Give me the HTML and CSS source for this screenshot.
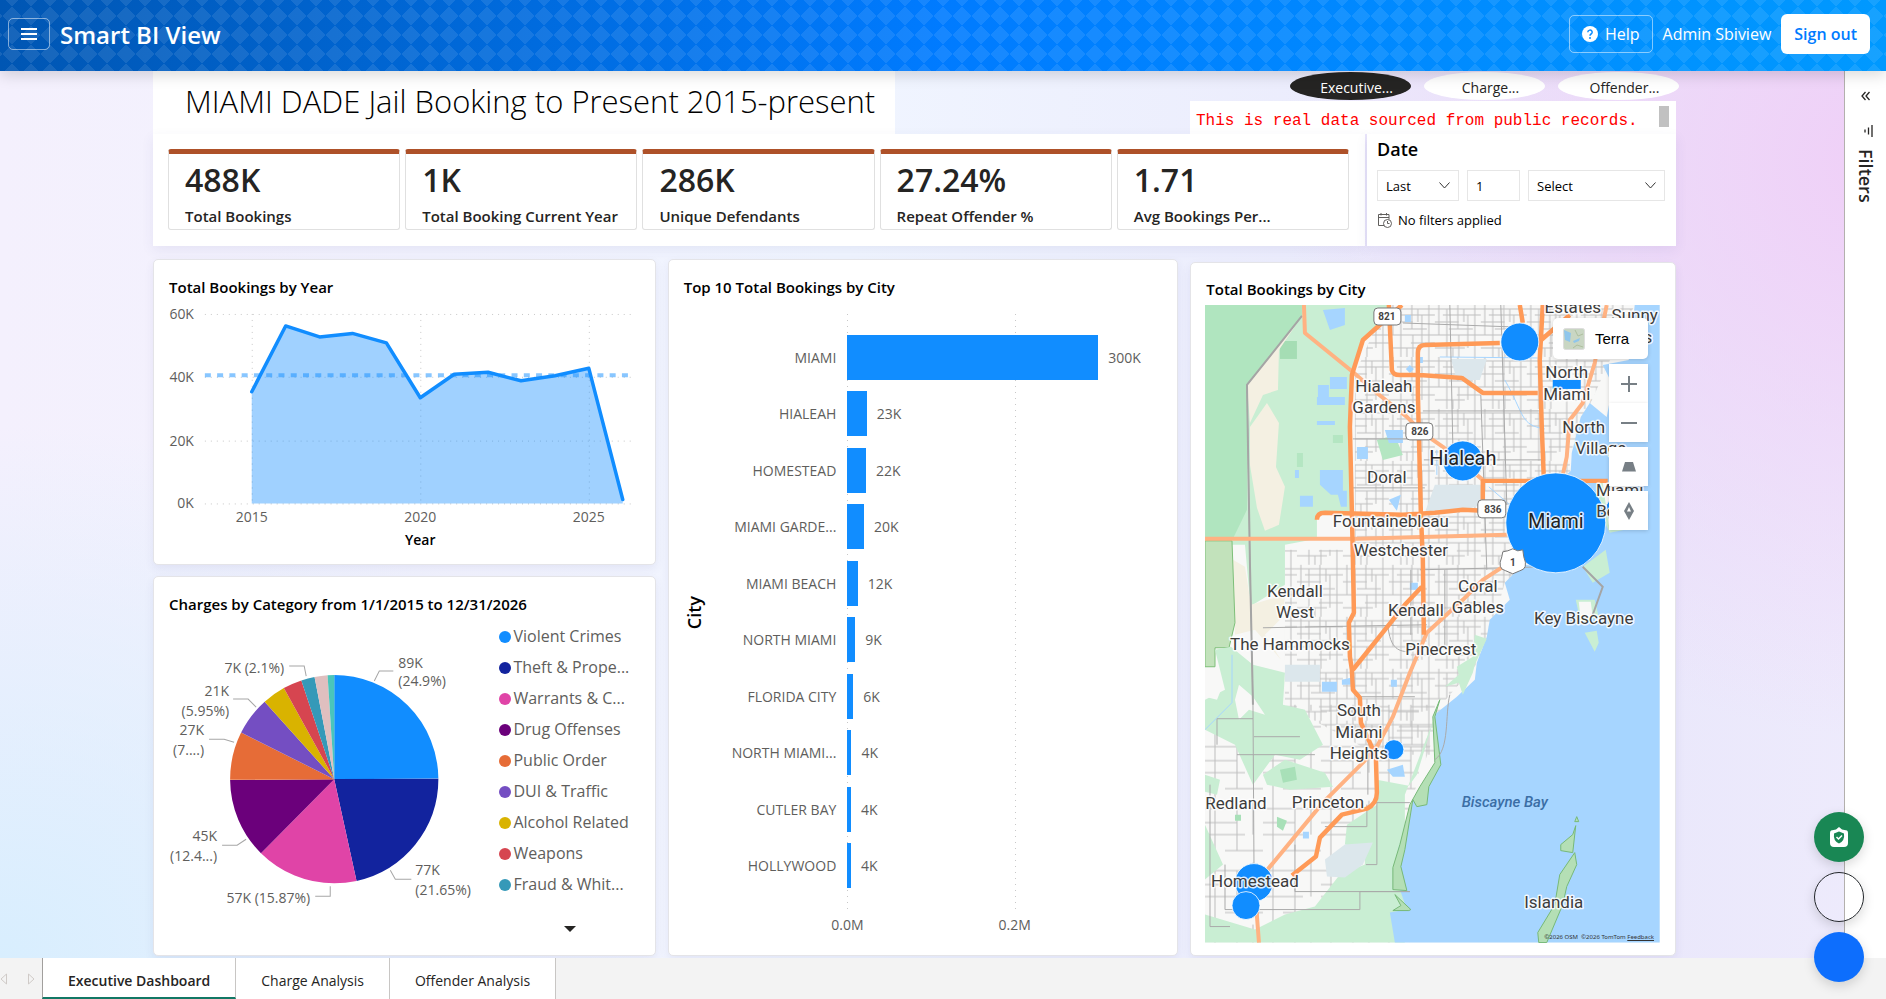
FILE: index.html
```html
<!DOCTYPE html>
<html lang="en">
<head>
    <meta charset="UTF-8">
    <title>Smart BI View</title>
    <link rel="stylesheet" href="styles.css">
</head>
<body>
    <header class="navbar">
        <button class="menu-btn" type="button" aria-label="Menu">
            <svg width="16" height="14" viewBox="0 0 16 14"><path d="M0 2h16M0 7h16M0 12h16" stroke="#fff" stroke-width="2"/></svg>
        </button>
        <a class="brand" href="#">Smart BI View</a>
        <div class="nav-right">
            <a class="help-btn" href="#">
                <svg width="16" height="16" viewBox="0 0 16 16"><circle cx="8" cy="8" r="8" fill="#fff"/><path d="M5.8 6.2a2.2 2.1 0 1 1 3.3 1.8C8.300 8.500 8 8.900 8 9.800" fill="none" stroke="#0a8bff" stroke-width="1.500"/><circle cx="8" cy="12" r="1" fill="#0a8bff"/></svg>
                Help
            </a>
            <span class="user">Admin Sbiview</span>
            <button class="signout" type="button">Sign out</button>
        </div>
    </header>

    <div class="workspace">
        <main class="report">
            <div class="top">
                <h1>MIAMI DADE Jail Booking to Present 2015-present</h1>
                <div class="top-right">
                    <nav class="pills">
                        <a class="pill selected" href="#">Executive...</a>
                        <a class="pill" href="#">Charge...</a>
                        <a class="pill" href="#">Offender...</a>
                    </nav>
                    <div class="notice">
                        <p>This is real data sourced from public records.</p>
                        <span class="thumb"></span>
                    </div>
                </div>
            </div>

            <div class="band">
                <section class="kpis">
                    <div class="kpi"><strong>488K</strong><span>Total Bookings</span></div>
                    <div class="kpi"><strong>1K</strong><span>Total Booking Current Year</span></div>
                    <div class="kpi"><strong>286K</strong><span>Unique Defendants</span></div>
                    <div class="kpi"><strong>27.24%</strong><span>Repeat Offender %</span></div>
                    <div class="kpi"><strong>1.71</strong><span>Avg Bookings Per...</span></div>
                </section>
                <section class="date">
                    <h2>Date</h2>
                    <div class="date-row">
                        <select class="period" aria-label="Direction"><option>Last</option><option>Next</option></select>
                        <input class="count" type="text" value="1" aria-label="Count">
                        <select class="unit" aria-label="Unit"><option>Select</option><option>Days</option></select>
                    </div>
                    <p class="no-filter">
                        <svg width="15" height="15" viewBox="0 0 15 15" fill="none" stroke="#605e5c"><path d="M7 12.500H1.500v-11h10.500v5M1.500 4.500H12M4 0v2.500M9.500 0v2.500"/><circle cx="10.500" cy="10.500" r="4"/><path d="M10.500 8v2.500h2"/></svg>
                        No filters applied
                    </p>
                </section>
            </div>

            <div class="cards">
                <div class="col">
                    <section class="card">
                        <h3>Total Bookings by Year</h3>
                        <svg class="chart" viewBox="0 0 502 265">
                            <g class="grid">
                                <path d="M51 14.500H478M51 77.500H478M51 141.500H478M51 204.500H478"/>
                                <path d="M98.500 14V206M267.500 14V206M436.500 14V206"/>
                            </g>
                            <path d="M98 92 132 26 166 37 199 33.500 233 43 267 98 301 74.500 335 72.500 368 81 402 76 436 68.500 470 200V204H98Z" fill="#118dff" fill-opacity=".4"/>
                            <path d="M51 75.500H478" stroke="#118dff" stroke-opacity=".5" stroke-width="4" stroke-dasharray="6 6.300"/>
                            <path d="M98 92 132 26 166 37 199 33.500 233 43 267 98 301 74.500 335 72.500 368 81 402 76 436 68.500 470 200" fill="none" stroke="#118dff" stroke-width="3.500" stroke-linejoin="round" stroke-linecap="round"/>
                            <g class="axis end">
                                <text x="40" y="19">60K</text>
                                <text x="40" y="82">40K</text>
                                <text x="40" y="146">20K</text>
                                <text x="40" y="209">0K</text>
                            </g>
                            <g class="axis mid">
                                <text x="98" y="223">2015</text>
                                <text x="267" y="223">2020</text>
                                <text x="436" y="223">2025</text>
                            </g>
                            <text class="axis-title mid" x="267" y="246">Year</text>
                        </svg>
                    </section>

                    <section class="card">
                        <h3>Charges by Category from 1/1/2015 to 12/31/2026</h3>
                        <div class="pie-row">
                            <svg class="pie" viewBox="0 0 345 320">
                                <g class="slices" transform="rotate(-90 180 162)">
                                    <circle cx="180" cy="162" r="52" pathLength="100" stroke="#118dff" stroke-dasharray="24.900 100"/>
                                    <circle cx="180" cy="162" r="52" pathLength="100" stroke="#12239e" stroke-dasharray="21.650 100" stroke-dashoffset="-24.900"/>
                                    <circle cx="180" cy="162" r="52" pathLength="100" stroke="#e044a7" stroke-dasharray="15.870 100" stroke-dashoffset="-46.550"/>
                                    <circle cx="180" cy="162" r="52" pathLength="100" stroke="#6b007b" stroke-dasharray="12.440 100" stroke-dashoffset="-62.420"/>
                                    <circle cx="180" cy="162" r="52" pathLength="100" stroke="#e66c37" stroke-dasharray="7.540 100" stroke-dashoffset="-74.860"/>
                                    <circle cx="180" cy="162" r="52" pathLength="100" stroke="#744ec2" stroke-dasharray="5.950 100" stroke-dashoffset="-82.400"/>
                                    <circle cx="180" cy="162" r="52" pathLength="100" stroke="#d9b300" stroke-dasharray="3.600 100" stroke-dashoffset="-88.350"/>
                                    <circle cx="180" cy="162" r="52" pathLength="100" stroke="#d64550" stroke-dasharray="2.920 100" stroke-dashoffset="-91.950"/>
                                    <circle cx="180" cy="162" r="52" pathLength="100" stroke="#3599b8" stroke-dasharray="2.100 100" stroke-dashoffset="-94.870"/>
                                    <circle cx="180" cy="162" r="52" pathLength="100" stroke="#dfbfbf" stroke-dasharray="1.990 100" stroke-dashoffset="-96.970"/>
                                    <circle cx="180" cy="162" r="52" pathLength="100" stroke="#4ac5bb" stroke-dasharray="1.040 100" stroke-dashoffset="-98.960"/>
                                </g>
                                <path class="leader" d="M220 64 225 54H239M135 49H150L152 59M79 82H94L102 90M55 122H70L80 125M68 228H83L92 222M161 279H176V269M236 253 241 262H257"/>
                                <g class="axis">
                                    <text x="244" y="51">89K</text>
                                    <text x="244" y="69">(24.9%)</text>
                                    <text x="261" y="258">77K</text>
                                    <text x="261" y="278">(21.65%)</text>
                                </g>
                                <g class="axis end">
                                    <text x="130" y="56">7K (2.1%)</text>
                                    <text x="75" y="79">21K</text>
                                    <text x="75" y="99">(5.95%)</text>
                                    <text x="50" y="118">27K</text>
                                    <text x="50" y="138">(7....)</text>
                                    <text x="63" y="224">45K</text>
                                    <text x="63" y="244">(12.4...)</text>
                                    <text x="156" y="286">57K (15.87%)</text>
                                </g>
                            </svg>
                            <div class="legend">
                                <ul>
                                    <li class="violent">Violent Crimes</li>
                                    <li class="theft">Theft &amp; Prope...</li>
                                    <li class="warrants">Warrants &amp; C...</li>
                                    <li class="drug">Drug Offenses</li>
                                    <li class="public">Public Order</li>
                                    <li class="dui">DUI &amp; Traffic</li>
                                    <li class="alcohol">Alcohol Related</li>
                                    <li class="weapons">Weapons</li>
                                    <li class="fraud">Fraud &amp; Whit...</li>
                                </ul>
                                <button class="more" type="button" aria-label="More"></button>
                            </div>
                        </div>
                    </section>
                </div>

                <section class="card">
                    <h3>Top 10 Total Bookings by City</h3>
                    <div class="bar-chart">
                        <span class="city-axis">City</span>
                        <ul class="names">
                            <li>MIAMI</li>
                            <li>HIALEAH</li>
                            <li>HOMESTEAD</li>
                            <li>MIAMI GARDE...</li>
                            <li>MIAMI BEACH</li>
                            <li>NORTH MIAMI</li>
                            <li>FLORIDA CITY</li>
                            <li>NORTH MIAMI...</li>
                            <li>CUTLER BAY</li>
                            <li>HOLLYWOOD</li>
                        </ul>
                        <ul class="bars">
                            <li><i style="width:79.700%"></i>300K</li>
                            <li><i style="width:6.200%"></i>23K</li>
                            <li><i style="width:5.900%"></i>22K</li>
                            <li><i style="width:5.300%"></i>20K</li>
                            <li><i style="width:3.300%"></i>12K</li>
                            <li><i style="width:2.500%"></i>9K</li>
                            <li><i style="width:1.900%"></i>6K</li>
                            <li><i style="width:1.300%"></i>4K</li>
                            <li><i style="width:1.200%"></i>4K</li>
                            <li><i style="width:1.200%"></i>4K</li>
                        </ul>
                        <div class="ticks"><span>0.0M</span><span>0.2M</span></div>
                    </div>
                </section>

                <section class="card map-card">
                    <h3>Total Bookings by City</h3>
                    <div class="map">
                        <svg viewBox="0 0 455 638">
                            <defs>
                                <pattern id="streets" width="46" height="52" patternUnits="userSpaceOnUse">
                                    <path d="M0 4H46M0 17H24M8 10H46M0 30H46M14 24H38M0 43H30M22 38H46M4 0V30M12 4V52M23 0V24M24 30V52M33 10V43M40 0V52M18 43V52M29 4V17" fill="none" stroke="#bfbfbf"/>
                                </pattern>
                                <pattern id="rural" width="58" height="62" patternUnits="userSpaceOnUse">
                                    <path d="M0 8H58M0 34H40M20 50H58M10 0V62M32 8V50M48 0V34M0 22H32" fill="none" stroke="#bdbdbd"/>
                                </pattern>
                            </defs>
                            <rect width="455" height="638" fill="#f8f8f7"/>
                            <path d="M180 0H430L385 100 365 160 375 262 300 278 280 350 232 405 232 450H172L80 400V245H150V70Z" fill="url(#streets)"/>
                            <path d="M0 400H240L205 500V638H0Z" fill="url(#rural)"/>
                            <!-- parks and wetlands -->
                            <path d="M0 0H185V12L160 35 147 70 145 208H112V234L80 240V280L48 300V330L40 240H0Z" fill="#c9eed3"/>
                            <path d="M0 0H97V11L42 80V205L25 240H0Z" fill="#b0e5bf"/>
                            <path d="M75 36H92V54H75Z" fill="#a5ddb4"/>
                            <path d="M97 11 74 45 73 85 58 90 45 118 42 80Z" fill="#f4f0e2"/>
                            <path d="M45 122 62 98 74 118 71 162 80 182 74 220 60 226 52 203 45 160Z" fill="#f4f0e2"/>
                            <path d="M28 255 40 262 46 300 80 290 78 312 60 330 76 355 50 325 30 330Z" fill="#f4f0e2"/>
                            <path d="M0 236H27L30 318 24 343H10V362H0Z" fill="#c2e2bb" stroke="#7dbf78"/>
                            <path d="M10 345 26 342 48 360 80 368 78 400 100 405 118 440 95 455 70 450 48 480 30 440 0 425V395L20 385Z" fill="#c9eed3"/>
                            <path d="M10 365 16 385 12 395 0 392V365ZM34 380 48 392 60 410 44 405 34 415 30 395Z" fill="#f8f8f7"/>
                            <path d="M58 470 80 455 120 468 128 482 85 485 62 480ZM0 470 15 475 12 490 0 487ZM0 520 18 560 0 575Z" fill="#c9eed3"/>
                            <path d="M75 465 90 462 92 475 78 478ZM72 512 82 516 78 526 72 522ZM30 510H36V516H30Z" fill="#a8e0b8"/>
                            <path d="M230 412 212 470 204 481 172 475V500L142 520 140 540 160 545V560L135 570 110 602 80 610 50 625 0 610V638H200V490Z" fill="#c9eed3"/>
                            <path d="M120 555 140 540 168 538 158 560 140 573 122 572Z" fill="#dce7ec"/>
                            <path d="M172 135 190 130 198 150 178 155ZM92 148H98V162H92ZM128 130H138V138H128Z" fill="#b4e6c2"/>
                            <!-- airports and lakes -->
                            <path d="M230 180H277V200L250 208H220ZM246 54H282L275 75H252ZM80 360H115V377H80Z" fill="#dce7ec"/>
                            <path d="M118 5 140 3V20L125 25ZM125 72H142V84H125ZM113 80H124V92H113ZM112 92H140V100H112ZM112 116H130V120H112ZM180 125H198V138H184ZM115 165H138V190H126L115 180ZM95 191H108V202H95ZM132 186H142V202H136ZM184 195 196 190 192 206ZM152 142H163V154H152ZM205 278H213V285H205ZM117 377H132V387H117ZM137 375 150 372V380H137ZM186 375H192V382H186ZM90 165H94V173H90ZM182 465 198 460 200 472 188 472ZM98 527H104V534H98ZM200 10H206V17H200ZM212 52H218V58H212ZM182 4 190 8V12H182ZM205 60 209 64 205 68 201 64Z" fill="#a6d5ff"/>
                            <path d="M235 52 333 53M300 75C320 110 315 120 340 124M232 145V170M284 182 305 200M0 425 27 398V350" fill="none" stroke="#a6d5ff"/>
                            <!-- ocean -->
                            <path d="M455 0H430L424 55 398 60 408 80 402 112 385 98 376 112 367 148 366 166 355 175 375 262 318 260 300 278 305 295 285 315 282 332 272 358 270 375 252 392 232 408 228 412 233 462 223 482 208 495 205 512 193 545 195 585 202 605 185 608 190 638H455Z" fill="#a6d5ff"/>
                            <path d="M392 178 424 176 420 225 405 228 394 205ZM401 245 405 268 388 278 378 262ZM371 295H390L394 312 376 318ZM380 328 392 326 394 338 390 347Z" fill="#c9eed3"/>
                            <path d="M398 178 424 176 418 222 404 220ZM374 297H386L388 312 376 314Z" fill="#f8f8f7"/>
                            <path d="M270 330 282 334 270 360 268 368 258 390 254 378 240 382 254 370 252 362 268 352Z" fill="#c9eed3"/>
                            <path d="M235 395 230 412 236 460 224 482 222 500 212 502 208 495 200 545 196 562 202 586 188 585 188 563 195 540 205 500 215 482 230 458 228 412Z" fill="#b4dfb5" stroke="#76b977"/>
                            <path d="M190 590 206 605 204 606H188L196 601ZM358 600 342 638H334L333 628 350 600 355 570 370 548 372 560 362 582ZM356 540 368 530 371 521 368 548 356 546ZM372 512 374 517 370 517Z" fill="#b4dfb5" stroke="#76b977"/>
                            <!-- minor roads -->
                            <path d="M97 11 42 80 45 260 48 400 49 560M245 0 248 140M296 0 302 200M276 90 282 265M198 18 310 22M147 183H220M148 134H215M219 155H340M218 106H335M215 265 340 262M240 265V345M58 323 222 320M206 265V330M155 392H210M183 320C185 345 195 347 205 347M163 445V490M12 414H48M12 414V440M49 432H95M32 450H110M171 498H205M162 500V522H120M161 560H172V498M205 587H90V540M205 587H155V605H20V560M230 455C245 445 240 410 245 390M5 480V622H25" fill="none" stroke="#aaa"/>
                            <path d="M97 11 42 80 45 260 48 400M378 262 398 282 388 310" fill="none" stroke="#a5a5a5" stroke-width="2"/>
                            <!-- highways -->
                            <g class="highway">
                                <path class="light" d="M99 0 100 28 148 67 172 88 202 112 218 128 238 142 278 175M0 234 152 234 302 230M402 0 390 58 378 98 365 115 362 152 358 170M298 262 278 275 258 295 222 328 205 368 188 412 172 442 158 458 118 498 65 562 52 578 52 612 54 638"/>
                                <path d="M197 0 177 18 158 35 147 70 145 122 147 208 148 255 149 308 144 318 145 352 147 365 148 385 155 393 156 418 165 438 171 452 172 488Q172 499 162 504L137 510 115 533 111 552 87 571"/>
                                <path d="M184 0 187 65Q188 70 195 70H215L257 73 278 88H333M295 38 220 40Q213 40 213 48L213 88 216 208 218 255 219 330M315 0 318 18M338 0 335 55 337 122 339 172M333 38 365 10M403 176H278V200M112 215Q112 208 120 208L198 210 230 208 258 205 300 207M217 282 200 300 148 365"/>
                            </g>
                            <!-- route shields -->
                            <g class="shield">
                                <rect x="169" y="3" width="27" height="17" rx="4"/><text x="182" y="15">821</text>
                                <rect x="201" y="118" width="27" height="17" rx="4"/><text x="215" y="130">826</text>
                            </g>
                            <g fill="#118dff" stroke="#fff" stroke-opacity=".8">
                                <circle cx="315" cy="37" r="19"/>
                                <circle cx="258" cy="156" r="20"/>
                                <circle cx="415" cy="205" r="14"/>
                                <circle cx="351" cy="218" r="50"/>
                                <circle cx="189" cy="445" r="10"/>
                                <circle cx="49" cy="578" r="19"/>
                            </g>
                            <rect x="348" y="75" width="28" height="9" fill="#118dff"/>
                            <g class="shield">
                                <rect x="273" y="195" width="28" height="18" rx="4"/><text x="288" y="208">836</text>
                                <path d="M298 247 303 246 308 244 313 246 318 245 319 252Q324 264 315 266L308 269 301 266Q292 264 297 252Z"/><text x="308" y="261">1</text>
                            </g>
                            <g class="places">
                                <text x="179" y="87">Hialeah</text><text x="179" y="108">Gardens</text>
                                <text x="368" y="8">Estates</text>
                                <text x="430" y="16">Sunny</text><text x="430" y="38">Isles</text>
                                <text x="362" y="73">North</text><text x="362" y="95">Miami</text>
                                <text x="379" y="128">North</text><text x="396" y="149">Village</text>
                                <text x="182" y="178">Doral</text>
                                <text x="186" y="222">Fountainebleau</text>
                                <text x="196" y="251">Westchester</text>
                                <text x="415" y="191">Miami</text><text x="415" y="212">Beach</text>
                                <text x="273" y="287">Coral</text><text x="273" y="308">Gables</text>
                                <text x="90" y="292">Kendall</text><text x="90" y="313">West</text>
                                <text x="211" y="311">Kendall</text>
                                <text x="379" y="319">Key Biscayne</text>
                                <text x="85" y="345">The Hammocks</text>
                                <text x="236" y="350">Pinecrest</text>
                                <text x="154" y="411">South</text><text x="154" y="433">Miami</text><text x="154" y="454">Heights</text>
                                <text x="31" y="504">Redland</text>
                                <text x="123" y="503">Princeton</text>
                                <text x="50" y="582">Homestead</text>
                                <text x="349" y="603">Islandia</text>
                                <text class="big" x="258" y="160">Hialeah</text>
                                <text class="big" x="351" y="223">Miami</text>
                            </g>
                            <circle cx="41" cy="601" r="14" fill="#118dff" stroke="#fff" stroke-opacity=".8"/>
                            <text class="bay" x="300" y="502">Biscayne Bay</text>
                        </svg>
                        <button class="map-btn style-btn" type="button">
                            <svg width="22" height="22" viewBox="0 0 22 22"><rect x=".5" y=".5" width="21" height="21" rx="2" fill="#c9d6c3" stroke="#ddd"/><path d="M1 2 8 5 7 14 2 12ZM10 13 17 10 16 13 11 15Z" fill="#8fc6ec"/><path d="M12 2 15 8 20 6M10 20 14 17 20 19" fill="none" stroke="#aebf9f"/></svg>
                            Terra
                        </button>
                        <div class="map-tools">
                            <div>
                                <button class="map-btn" type="button" aria-label="Zoom in"><svg width="16" height="16" viewBox="0 0 16 16"><path d="M8 0V16M0 8H16" stroke="#777f85" stroke-width="2"/></svg></button>
                                <button class="map-btn" type="button" aria-label="Zoom out"><svg width="16" height="16" viewBox="0 0 16 16"><path d="M0 8H16" stroke="#777f85" stroke-width="2"/></svg></button>
                            </div>
                            <button class="map-btn" type="button" aria-label="Pitch"><svg width="14" height="10" viewBox="0 0 14 10"><path d="M3 0H11L14 9.500H0Z" fill="#777f85"/></svg></button>
                            <button class="map-btn" type="button" aria-label="Rotate"><svg width="10" height="18" viewBox="0 0 10 18"><path d="M5 0 10 9 5 18 0 9Z" fill="#777f85"/><path d="M5 5 7 9.500H3Z" fill="#fff"/></svg></button>
                        </div>
                        <p class="credit">©2026 OSM &nbsp;©2026 TomTom <a href="#">Feedback</a></p>
                    </div>
                </section>
            </div>
        </main>

        <aside class="filters">
            <svg width="9" height="10" viewBox="0 0 9 10" fill="none" stroke="#252423" stroke-width="1.300"><path d="M4.500 1 1 5 4.500 9M8.500 1 5 5 8.500 9"/></svg>
            <svg class="funnel" width="10" height="12" viewBox="0 0 10 12" fill="none" stroke="#252423" stroke-width="1.300"><path d="M9 0V12M5.500 2.500V9.500M2 4.500V7.500"/></svg>
            <span>Filters</span>
        </aside>
    </div>

    <footer class="tabs">
        <button class="arrow" type="button" aria-label="Previous"><svg width="7" height="12" viewBox="0 0 7 12"><path d="M6.500 1V11L1 6Z" fill="none" stroke="#cfcac7"/></svg></button>
        <button class="arrow" type="button" aria-label="Next"><svg width="7" height="12" viewBox="0 0 7 12"><path d="M.5 1V11L6 6Z" fill="none" stroke="#cfcac7"/></svg></button>
        <a class="tab selected" href="#">Executive Dashboard</a>
        <a class="tab" href="#">Charge Analysis</a>
        <a class="tab" href="#">Offender Analysis</a>
    </footer>

    <div class="fabs">
        <button class="fab green" type="button" aria-label="Security">
            <svg width="18" height="20" viewBox="0 0 18 20"><path d="M9 0 12 2.500 17 3.500Q18 4 18 6V16Q18 20 14 20H4Q0 20 0 16V6Q0 4 1 3.500L6 2.500Z" fill="#fff"/><path d="M9 4.500 14 6.500Q15 14 9 16.500 3 14 4 6.500Z" fill="#198754"/><path d="M6.500 10 8.500 12 12 8.500" fill="none" stroke="#fff" stroke-width="1.500"/></svg>
        </button>
        <button class="fab outline" type="button" aria-label="Chat"></button>
        <button class="fab blue" type="button" aria-label="Assistant"></button>
    </div>
</body>
</html>
```
FILE: styles.css
```css
*{
    box-sizing: border-box;
    margin: 0;
    padding: 0;
}
body{
    min-height: 100vh;
    display: flex;
    flex-direction: column;
    font-family: "Open Sans", "Noto Sans", sans-serif;
    font-size: 14px;
    color: #252423;
}
ul{
    list-style: none;
}
a{
    color: inherit;
    text-decoration: none;
}
button, input, select{
    font: inherit;
    color: inherit;
}
svg{
    display: block;
}

/* header */
.navbar{
    display: flex;
    align-items: center;
    height: 71px;
    padding: 0 16px 3px 8px;
    color: #fff;
    font-size: 16px;
    background-image:
        linear-gradient(45deg, rgba(255,255,255,.09) 25%, transparent 25%, transparent 75%, rgba(255,255,255,.09) 75%),
        linear-gradient(-45deg, rgba(255,255,255,.09) 25%, transparent 25%, transparent 75%, rgba(255,255,255,.09) 75%),
        linear-gradient(90deg, #0056b3, #007bff 50%, #0099ff);
    background-size: 19px 19px, 19px 19px, auto;
    background-position: 12px 16px, 12px 16px, 0 0;
    box-shadow: 0 4px 14px rgba(0,0,0,.15);
    position: relative;
    z-index: 2;
}
.menu-btn{
    width: 42px;
    height: 32px;
    display: flex;
    align-items: center;
    justify-content: center;
    background: none;
    border: 1px solid rgba(255,255,255,.5);
    border-radius: 5px;
}
.brand{
    margin-left: 10px;
    font-size: 24px;
    font-weight: 600;
}
.nav-right{
    margin-left: auto;
    display: flex;
    align-items: center;
    gap: 10px;
}
.help-btn{
    display: flex;
    align-items: center;
    gap: 7px;
    height: 38px;
    padding: 0 12px;
    border: 1px solid rgba(255,255,255,.5);
    border-radius: 5px;
}
.signout{
    height: 40px;
    padding: 0 13px;
    background: #fff;
    color: #007bff;
    border: 0;
    border-radius: 6px;
    font-weight: 600;
}

/* report canvas */
.workspace{
    flex: 1;
    display: flex;
    background:
        radial-gradient(ellipse 32% 65% at 100% 10%, #efcff7, rgba(239,207,247,0)),
        radial-gradient(ellipse 35% 60% at 0 100%, #d8eefe, rgba(216,238,254,0)),
        linear-gradient(90deg, #f4f0fd, #f0f5ff 45%, #e9e7fb 85%, #eeebfc);
}
.report{
    flex: 1;
    min-width: 0;
    padding: 0 168px 2px 153px;
}
.top{
    display: flex;
    justify-content: space-between;
}
h1{
    height: 63px;
    padding: 0 20px 0 32px;
    background: #fff;
    color: #000;
    font-size: 31px;
    line-height: 60px;
    font-weight: 300;
    white-space: nowrap;
}
.top-right{
    width: 486px;
}
.pills{
    display: flex;
    justify-content: flex-end;
    gap: 13px;
    margin-right: -3px;
    padding-top: 1px;
}
.pill{
    width: 121px;
    height: 28px;
    padding-left: 12px;
    border-radius: 50%;
    background: #fff;
    text-align: center;
    line-height: 32px;
    overflow: hidden;
}
.pill.selected{
    background: #252423;
    color: #fff;
}
.notice{
    display: flex;
    justify-content: space-between;
    height: 33px;
    margin-top: 1px;
    padding: 5px 7px 0 6px;
    background: #fff;
    color: #f00;
    font-family: "Liberation Mono", monospace;
    font-size: 16px;
    line-height: 30px;
    white-space: nowrap;
}
.thumb{
    width: 10px;
    height: 21px;
    background: #c1c1c1;
}
.band{
    display: flex;
    gap: 2px;
    height: 112px;
    margin-bottom: 13px;
}
.kpis, .date{
    background: #fff;
    box-shadow: 0 4px 12px rgba(60,60,140,.08);
}
.kpis{
    flex: 1;
    display: grid;
    grid-template-columns: repeat(5, 1fr);
    gap: 5px;
    padding: 15px 16px 16px 15px;
}
.kpi{
    display: flex;
    flex-direction: column;
    border: 1px solid #e0e0e0;
    border-top: 5px solid #ae5129;
    border-radius: 3px;
    padding-left: 16px;
    white-space: nowrap;
}
.kpi strong{
    font-size: 32px;
    line-height: 52px;
    font-weight: 600;
}
.kpi span{
    font-size: 15px;
    line-height: 20px;
    font-weight: 600;
}
.date{
    width: 309px;
    padding: 3px 11px 0 10px;
    color: #000;
}
.date h2{
    font-size: 18px;
    line-height: 24px;
    font-weight: 600;
}
.date-row{
    display: flex;
    gap: 8px;
    margin-top: 9px;
}
.date-row select, .date-row input{
    height: 31px;
    padding: 0 8px;
    border: 1px solid #e6e6e6;
    background: #fff;
    font-size: 13px;
    border-radius: 0;
    min-width: 0;
}
.date-row select{
    appearance: none;
    background: #fff url("data:image/svg+xml,%3Csvg xmlns='http://www.w3.org/2000/svg' width='11' height='7'%3E%3Cpath d='M.5 .5 5.500 6 10.500 .5' fill='none' stroke='%23333'/%3E%3C/svg%3E") no-repeat right 8px center;
}
.period{
    width: 82px;
}
.count{
    width: 53px;
}
.unit{
    flex: 1;
}
.no-filter{
    display: flex;
    align-items: center;
    gap: 6px;
    margin-top: 9px;
    font-size: 13px;
    line-height: 20px;
}

/* cards */
.cards{
    display: grid;
    grid-template-columns: 503fr 511fr 486fr;
    gap: 12px;
}
.col{
    display: flex;
    flex-direction: column;
    gap: 11px;
}
.card{
    min-width: 0;
    background: #fff;
    border: 1px solid #e4e4e8;
    border-radius: 5px;
    box-shadow: 0 4px 10px rgba(60,60,140,.08);
}
.col .card:last-child{
    flex: 1;
}
.card h3{
    padding: 15px 15px 0;
    color: #000;
    font-size: 15px;
    line-height: 24px;
    font-weight: 600;
    white-space: nowrap;
}
.chart{
    width: 100%;
    margin-top: 1px;
}
.grid{
    fill: none;
    stroke: #c8c8c8;
    stroke-dasharray: 1 5;
}
.axis{
    font-size: 14px;
    fill: #605e5c;
}
.axis-title{
    font-size: 14px;
    font-weight: 600;
}
.end{
    text-anchor: end;
}
.mid{
    text-anchor: middle;
}
.pie-row{
    display: flex;
    margin-top: 1px;
}
.pie{
    flex: 345;
    min-width: 0;
    align-self: flex-start;
}
.slices circle{
    fill: none;
    stroke-width: 104px;
}
.leader{
    fill: none;
    stroke: #a6a6a6;
}
.legend{
    flex: 155;
    padding-top: 4px;
    color: #605e5c;
}
.legend li{
    display: flex;
    align-items: center;
    gap: 2px;
    font-size: 16px;
    line-height: 31px;
    white-space: nowrap;
}
.legend li::before{
    content: "";
    width: 12px;
    height: 12px;
    border-radius: 50%;
    background: #118dff;
}
.legend .theft::before{
    background: #12239e;
}
.legend .warrants::before{
    background: #e044a7;
}
.legend .drug::before{
    background: #6b007b;
}
.legend .public::before{
    background: #e66c37;
}
.legend .dui::before{
    background: #744ec2;
}
.legend .alcohol::before{
    background: #d9b300;
}
.legend .weapons::before{
    background: #d64550;
}
.legend .fraud::before{
    background: #3599b8;
}
.more{
    display: block;
    margin: 26px 0 0 65px;
    background: none;
    border: 6px solid transparent;
    border-top-color: #252423;
    border-bottom: 0;
}

/* bar chart */
.bar-chart{
    display: grid;
    grid-template-columns: 20px 1fr 315px;
    grid-template-rows: 597px auto;
    column-gap: 11px;
    margin-top: 15px;
    padding: 0 15px 12px;
    color: #605e5c;
}
.city-axis{
    align-self: center;
    writing-mode: vertical-rl;
    transform: rotate(180deg);
    color: #000;
    font-size: 18px;
    line-height: 20px;
    font-weight: 600;
}
.names, .bars{
    display: flex;
    flex-direction: column;
    padding: 15px 0 17px;
}
.names li, .bars li{
    flex: 1;
    display: flex;
    align-items: center;
    white-space: nowrap;
}
.names li{
    justify-content: flex-end;
}
.bars{
    background:
        repeating-linear-gradient(#c8c8c8 0 1px, transparent 1px 6px) 0 0 / 1px 100% no-repeat,
        repeating-linear-gradient(#c8c8c8 0 1px, transparent 1px 6px) 53.3% 0 / 1px 100% no-repeat;
}
.bars i{
    height: 45px;
    margin-right: 10px;
    background: #118dff;
}
.ticks{
    grid-column: 3;
    display: flex;
    gap: 135px;
    margin-left: -16px;
    line-height: 28px;
}

/* map */
.map-card{
    margin-top: 3px;
    padding-bottom: 12px;
}
.map-card h3{
    padding-top: 14px;
}
.map{
    position: relative;
    margin: 4px 15px 0 14px;
}
.map > svg{
    width: 100%;
    overflow: hidden;
}
.highway path{
    fill: none;
    stroke: #ff9a57;
    stroke-width: 4.5px;
    stroke-linejoin: round;
}
.highway .light{
    stroke: #ffb282;
    stroke-width: 4px;
}
.shield rect, .shield path{
    fill: #fff;
    stroke: #777;
}
.shield text{
    font: 700 10px Roboto, sans-serif;
    fill: #444;
    text-anchor: middle;
}
.places text, .bay{
    font: 17px Roboto, sans-serif;
    fill: #3c3c3c;
    text-anchor: middle;
    paint-order: stroke;
    stroke: #fff;
    stroke-opacity: .85;
    stroke-width: 3px;
    stroke-linejoin: round;
}
.places .big{
    font-size: 20px;
    fill: #222;
}
.bay{
    font-size: 15px;
    font-style: italic;
    font-weight: 500;
    fill: #3b6ea5;
    stroke: none;
}
.map-btn{
    display: flex;
    align-items: center;
    justify-content: center;
    width: 39px;
    height: 39px;
    background: #fff;
    border: 0;
    box-shadow: 0 1px 4px rgba(0,0,0,.16);
}
.style-btn{
    position: absolute;
    top: 13px;
    right: 12px;
    width: 95px;
    height: 41px;
    justify-content: flex-start;
    gap: 10px;
    padding-left: 10px;
    border-radius: 5px;
    color: #000;
    font: 15px "Liberation Sans", sans-serif;
}
.map-tools{
    position: absolute;
    top: 59px;
    right: 12px;
    display: flex;
    flex-direction: column;
    gap: 5px;
}
.credit{
    position: absolute;
    right: 6px;
    bottom: 2px;
    color: #333;
    font: 6px "Noto Sans", sans-serif;
}
.credit a{
    text-decoration: underline;
}

/* filter pane */
.filters{
    width: 42px;
    display: flex;
    flex-direction: column;
    align-items: center;
    padding-top: 20px;
    background: #fff;
    border-left: 1px solid #b3b0ad;
}
.funnel{
    margin: 24px 0 12px 5px;
}
.filters span{
    writing-mode: vertical-rl;
    font-size: 18px;
    line-height: 24px;
    font-weight: 600;
}

/* page tabs */
.tabs{
    display: flex;
    height: 41px;
    background: #f3f3f3;
}
.arrow{
    display: flex;
    align-items: center;
    justify-content: center;
    width: 22px;
    background: none;
    border: 0;
}
.arrow:first-child{
    width: 20px;
    justify-content: flex-start;
}
.tab{
    padding: 0 25px;
    background: #fff;
    border-right: 1px solid #c8c6c4;
    line-height: 46px;
}
.tab.selected{
    border-left: 1px solid #a19f9d;
    border-bottom: 2px solid #117865;
    font-weight: 600;
}

/* floating buttons */
.fabs{
    position: fixed;
    right: 22px;
    bottom: 17px;
    z-index: 3;
    display: flex;
    flex-direction: column;
    gap: 10px;
}
.fab{
    display: flex;
    align-items: center;
    justify-content: center;
    width: 50px;
    height: 50px;
    border: 0;
    border-radius: 50%;
    box-shadow: 0 4px 12px rgba(0,0,0,.15);
}
.green{
    background: #198754;
}
.outline{
    background: none;
    border: 1px solid #212529;
}
.blue{
    background: #0d6efd;
}
```
